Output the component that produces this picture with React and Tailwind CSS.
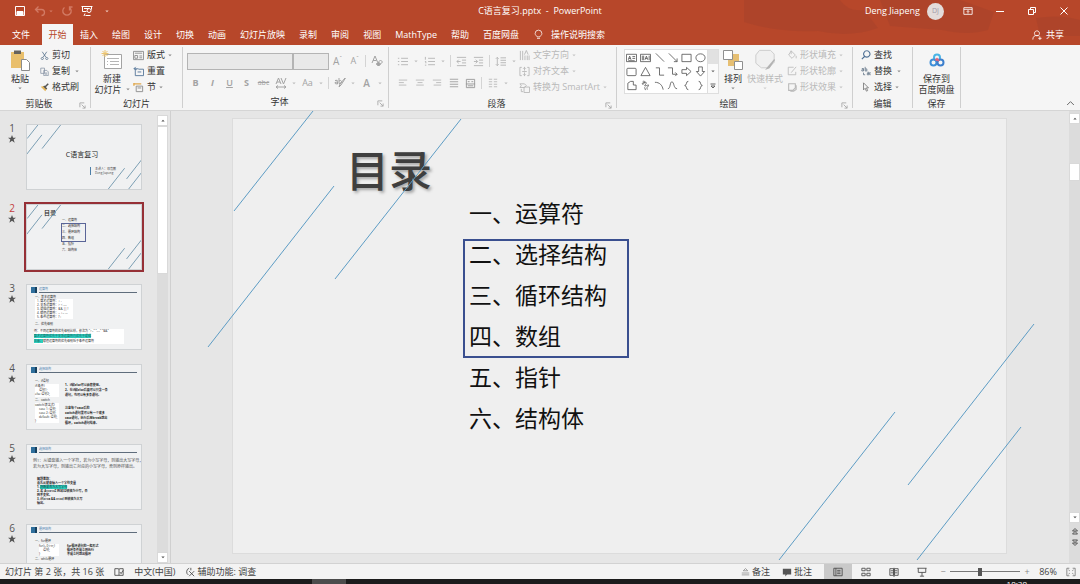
import React, { useState } from 'react';
import { clsx } from 'clsx';

const TABS = ['插入', '绘图', '设计', '切换', '动画', '幻灯片放映', '录制', '审阅', '视图', 'MathType', '帮助', '百度网盘'];

const OUTLINE = ['一、运算符', '二、选择结构', '三、循环结构', '四、数组', '五、指针', '六、结构体'];

const SHAPES = [
  { name: '横排文本框', d: 'M.5 2.5h11v8H.5zM2.5 8.5l1.5-4 1.5 4M3 7h2M7 5h3M7 7h3M2.500 9.500h7' },
  { name: '竖排文本框', d: 'M.5 2.5h11v8H.5zM5.500 8.500l1.500-4 1.500 4M6 7h2M2.500 4v5M4 4v5M10 4v5' },
  { name: '直线', d: 'M2 1.500l9 9' },
  { name: '箭头', d: 'M2 1.500l9 9M11 7v3.500H7.500' },
  { name: '矩形', d: 'M1 2.500h10v8H1z' },
  { name: '椭圆', d: 'M6 2c3 0 5 2 5 4.300s-2 4.300-5 4.300-5-2-5-4.300S3 2 6 2z' },
  { name: '圆角矩形', d: 'M2 2.500h8q1 0 1 1v6q0 1-1 1H2q-1 0-1-1v-6q0-1 1-1z' },
  { name: '三角形', d: 'M6 1.500l5 9H1z' },
  { name: '肘形连接符', d: 'M2 2h4v8h5' },
  { name: '肘形箭头', d: 'M1 2h5v7h5M9 7l2 2-2 2' },
  { name: '右箭头', d: 'M1 4h5V1.500L11 6l-5 4.500V8H1z' },
  { name: '下箭头', d: 'M4 1h4v5h2.500L6 11 1.500 6H4z' },
  { name: '任意多边形', d: 'M2 3.500l3-2h3v4h3v5H2z' },
  { name: '自由曲线', d: 'M3 1.500c4-1 2 3 0 3s0-2 3-2-3 5 0 4 4-2 3 0-2 1-1 4M5 8l1 3' },
  { name: '弧形', d: 'M1 2.500c5 0 8 3 9 8' },
  { name: '曲线', d: 'M1 9.500c3 0 2-8 4.500-7.500S7 9.500 11 9.500' },
  { name: '左大括号', d: 'M8 1.500Q6 1.500 6 3.500T4 6q2 .5 2 2.500t2 2' },
  { name: '右大括号', d: 'M4 1.500q2 0 2 2T8 6Q6 6.500 6 8.500t-2 2' },
];

function Icon({ d, className, box = 12, width = 1, children }) {
  return (
    <svg
      viewBox={`0 0 ${box} ${box}`}
      className={clsx('shrink-0', className)}
      fill="none"
      stroke="currentColor"
      strokeWidth={width}
      aria-hidden="true"
    >
      {d && <path d={d} />}
      {children}
    </svg>
  );
}

function Caret({ className = 'text-[#8a8a8a]' }) {
  return (
    <svg viewBox="0 0 6 4" className={clsx('w-1 h-[3px] shrink-0', className)} aria-hidden="true">
      <path d="M.5 .5L3 3 5.500 .5z" fill="currentColor" />
    </svg>
  );
}

function CaretButton({ label }) {
  return (
    <button aria-label={label} className="w-[10px] h-4 flex items-center justify-center">
      <Caret className="text-[#bdbdbd]" />
    </button>
  );
}

function Tool({ label, children }) {
  return (
    <button aria-label={label} className="w-[17px] h-4 flex items-center justify-center whitespace-nowrap">
      {children}
    </button>
  );
}

function Divider() {
  return <span className="w-px h-3 mx-[2px] bg-[#d4d4d4]" />;
}

function Group({ title, launcher, className, children }) {
  return (
    <section aria-label={title} className={clsx('shrink-0 flex flex-col border-r border-[#cfcfcf]', className)}>
      <div className="h-[49px] flex">{children}</div>
      <div
        className={clsx('flex-1 relative flex items-center justify-center pt-[3px] text-[#333]', launcher && 'pr-3')}
      >
        {title}
        {launcher && (
          <button aria-label={`${title}设置`} className="absolute right-1 bottom-px text-[#a8a8a8]">
            <Icon className="size-[7px]" box={8} d="M1 6V1h5M3 3l4 4M7 4v3H4" />
          </button>
        )}
      </div>
    </section>
  );
}

function SmallAction({ icon, caret, disabled, children }) {
  return (
    <button
      disabled={disabled}
      className={clsx('h-4 flex items-center gap-[3px] whitespace-nowrap', disabled ? 'text-[#b9b9b9]' : 'text-[#333]')}
    >
      {icon}
      <span>{children}</span>
      {caret && <Caret className={disabled ? 'text-[#c6c6c6]' : 'text-[#8a8a8a]'} />}
    </button>
  );
}

function BigAction({ icon, lines, caret, disabled, className }) {
  return (
    <button
      disabled={disabled}
      className={clsx('flex flex-col items-center leading-[11px]', disabled ? 'text-[#b9b9b9]' : 'text-[#333]', className)}
    >
      <span className="h-[26px] flex items-center">{icon}</span>
      {lines.map((l, i) => (
        <span key={l} className="flex items-center gap-1 whitespace-nowrap">
          {l}
          {caret === 'inline' && i === lines.length - 1 && <Caret />}
        </span>
      ))}
      {caret === 'below' && (
        <span className="h-2 flex items-center">
          <Caret className={disabled ? 'text-[#cfcfcf]' : 'text-[#8a8a8a]'} />
        </span>
      )}
    </button>
  );
}

function TitleBar() {
  return (
    <header className="h-[22px] relative grid grid-cols-[1fr_auto_1fr] items-center text-white">
      <div className="flex items-center pl-[14px]">
        <button aria-label="保存" className="w-3">
          <Icon className="size-3" d="M1.500 1.500h9v9h-9zM3 6.500h6v4H3zM5 8.500v2">
            <path d="M3 7h6v3H3z" fill="currentColor" stroke="none" />
          </Icon>
        </button>
        <button aria-label="撤消" className="ml-2 w-3 text-[#d27a64]">
          <Icon className="size-3" d="M4.500 1.500l-3 3 3 3M1.500 4.500h6q3 0 3 3t-3 3" width={1.300} />
        </button>
        <span className="ml-[3px] flex"><Caret className="text-[#d27a64]" /></span>
        <button aria-label="恢复" className="ml-2 w-3 text-[#d27a64]">
          <Icon className="size-3" d="M3.500 2.500a4.200 4.200 0 1 0 5 0M8.500 5.500V2h3" width={1.300} />
        </button>
        <button aria-label="从头开始" className="ml-2 w-3">
          <Icon className="size-3" d="M.5 1.500h11M1.500 1.500v5h4M10.500 1.500v3M3 3.500h5M4 8.500l-1 2.500M8 7.500a2 2 0 1 0 .1-4 2 2 0 0 0-.1 4M4.500 10.500h5" />
        </button>
        <button aria-label="自定义快速访问工具栏" className="ml-3 flex"><Caret className="text-[#f0c9bd]" /></button>
      </div>
      <h1 className="text-[9px]">C语言复习.pptx&nbsp; -&nbsp; PowerPoint</h1>
      <div className="flex items-center justify-end h-full">
        <span>Deng Jiapeng</span>
        <span className="ml-[7px] mr-2 size-[17px] rounded-full bg-[#e3dcda] text-[#a09aa8] text-[7px] flex items-center justify-center">DJ</span>
        <button aria-label="功能区显示选项" className="w-8 flex justify-center">
          <Icon className="w-[10px] h-[10px]" d="M1 2h10v8H1zM1 4h10M6 9V5.500M4.500 7L6 5.500 7.500 7" />
        </button>
        <button aria-label="最小化" className="w-8 flex justify-center">
          <Icon className="size-2" box={8} d="M0 4.500h8" />
        </button>
        <button aria-label="还原" className="w-8 flex justify-center">
          <Icon className="size-2" box={8} d="M.5 2.500h5v5h-5zM2.500 2V.5h5v5H6" />
        </button>
        <button aria-label="关闭" className="w-8 flex justify-center">
          <Icon className="size-2" box={8} d="M.5 .5l7 7M7.500 .5l-7 7" />
        </button>
      </div>
    </header>
  );
}

function TabBar() {
  return (
    <nav className="flex items-stretch h-[23px] pt-[2px] text-white relative" aria-label="功能区选项卡">
      <button className="w-[42px]">文件</button>
      <button className="w-[31px] bg-[#f5f5f5] text-[#b7472a]">开始</button>
      {TABS.map((t) => (
        <button key={t} className="px-[7px] whitespace-nowrap">{t}</button>
      ))}
      <button className="flex items-center gap-2 pl-2">
        <Icon className="w-[9px] h-3" d="M4 8.500C4 7 1.500 6.500 1.500 4a4 4 0 0 1 9 0c0 2.500-2.500 3-2.500 4.500zM4 10.500h4" />
        操作说明搜索
      </button>
      <button className="ml-auto mr-4 flex items-center gap-1">
        <Icon className="size-[10px]" d="M6 1a3 3 0 1 1-.1 0M1 11.500q0-5 5-5 2 0 3 1M9.500 8v4M7.500 10h4" />
        共享
      </button>
    </nav>
  );
}

function Ribbon() {
  return (
    <div className="h-[66px] flex relative bg-[#f5f5f5] pt-[2px] pb-[2px] border-b border-[#d5d5d5]">
      <Group title="剪贴板" launcher className="w-[91px]">
        <BigAction
          className="w-[40px]"
          caret="below"
          lines={['粘贴']}
          icon={
            <svg viewBox="0 0 20 22" className="w-5 h-[22px]" aria-hidden="true">
              <path d="M1 3h13v16H1z" fill="#e9bf6c" />
              <path d="M4 1.500h7V5H4z" fill="#66625c" />
              <path d="M11.500 10.500h5l3 3v8h-8z" fill="#fff" stroke="#8b8b8b" />
            </svg>
          }
        />
        <div className="flex flex-col">
          <SmallAction icon={<Icon className="size-[9px] text-[#4d6a86]" d="M3 1l5 7.500M9 1L4 8.500M3 8.500a1.500 1.500 0 1 0 .1 0M9 8.500a1.500 1.500 0 1 0 .1 0" />}>剪切</SmallAction>
          <SmallAction caret icon={<Icon className="size-[9px] text-[#8492a3]" d="M1 1.500h5v7H1zM5 4.500h4l2 2v5H5zM6.500 8h3M6.500 9.500h3" />}>复制&nbsp;</SmallAction>
          <SmallAction
            icon={
              <svg viewBox="0 0 12 12" className="size-[9px]" aria-hidden="true">
                <path d="M1 5l4-1 4 4-2 3z" fill="#e5b65a" />
                <path d="M7 5l4-4M5 4l4 4" stroke="#555" strokeWidth="2" />
              </svg>
            }
          >
            格式刷
          </SmallAction>
        </div>
      </Group>

      <Group title="幻灯片" className="w-[92px]">
        <BigAction
          className="w-[42px]"
          caret="inline"
          lines={['新建', '幻灯片']}
          icon={
            <svg viewBox="0 0 22 22" className="size-[22px]" aria-hidden="true">
              <path d="M3.500 5.500h17v14h-17z" fill="#fff" stroke="#a3a3a3" />
              <path d="M6 9.500h12M9 12.500h9M9 15.500h9M6 12.500h1M6 15.500h1" stroke="#b5b5b5" />
              <path d="M4 1v7M.5 4.500h7M1.500 2l5 5M6.500 2l-5 5" stroke="#edc56f" />
            </svg>
          }
        />
        <div className="flex flex-col">
          <SmallAction caret icon={<Icon className="size-[11px] text-[#8d8d8d]" d="M.5 1.500h11v9H.5zM2 3.500h8M2 6h3v3H2zM7 6.500h3M7 8.500h3" />}>版式</SmallAction>
          <SmallAction icon={<Icon className="size-[11px] text-[#56779a]" d="M2.500 3.500v7h9v-7H6M5 6.500h4M1 3l2-2M1 3l3 1M1 3h5" />}>重置</SmallAction>
          <SmallAction
            caret
            icon={
              <Icon className="size-[11px] text-[#8d8d8d]" d="M3.500 4.500h7v6h-7zM5 6.500h4">
                <path d="M1 2h8M1 1v3" stroke="#e0a84d" strokeWidth="1.500" />
              </Icon>
            }
          >
            节
          </SmallAction>
        </div>
      </Group>

      <Group title="字体" launcher className="w-[206px]">
        <div className="pl-1 flex flex-col gap-[5px] pt-[5px] text-[#a3a3a3]">
          <div className="flex items-center h-[18px]">
            <select aria-label="字体" disabled className="w-[106px] h-[17px] border border-[#b4b4b4] bg-[#e9e9e9] appearance-none" />
            <select aria-label="字号" disabled className="w-9 h-[17px] border border-[#b4b4b4] bg-[#e9e9e9] appearance-none" />
            <Tool label="增大字号"><span className="text-[10px]">A</span><sup className="text-[6px]">ˆ</sup></Tool>
            <Tool label="减小字号"><span className="text-[9px]">A</span><sup className="text-[6px]">ˇ</sup></Tool>
            <Divider />
            <Tool label="清除所有格式">
              <Icon className="size-3" d="M1 8l3-7 2.500 6M2 5.500h3.500M5.500 9l4-4 2 2-4 4z">
                <path d="M5.500 9l2-2 2 2-2 2z" fill="currentColor" />
              </Icon>
            </Tool>
          </div>
          <div className="flex items-center">
            <Tool label="加粗"><b>B</b></Tool>
            <Tool label="倾斜"><i className="font-bold">I</i></Tool>
            <Tool label="下划线"><u className="font-semibold">U</u></Tool>
            <Tool label="文字阴影"><b>S</b></Tool>
            <Tool label="删除线"><s className="text-[7px]">abc</s></Tool>
            <Tool label="字符间距"><Icon className="size-3" d="M1 7l2.500-6L6 7M2 5h3M6 1l2.500 6L11 1M1 10h10M3 8.500L1 10l2 1.500M9 8.500l2 1.500-2 1.500" /></Tool>
            <CaretButton label="字符间距选项" />
            <Tool label="更改大小写">Aa</Tool>
            <CaretButton label="大小写选项" />
            <Divider />
            <Tool label="文本突出显示颜色"><Icon className="size-3" d="M1 3.500q3-1 2.500 1v2.500q-3 0-2.500-1.500l2-.5M5 1v5.500q3 0 2.500-2T5 4M11.500 1L7 8l-2 2 1-3 5-6" /></Tool>
            <CaretButton label="突出显示选项" />
            <Tool label="字体颜色"><span className="text-[10px] font-semibold">A</span></Tool>
            <CaretButton label="字体颜色选项" />
          </div>
        </div>
      </Group>

      <Group title="段落" launcher className="w-[228px]">
        <div className="pl-[5px] flex flex-col gap-[5px] pt-[5px] text-[#b5b5b5]">
          <div className="flex items-center h-[18px]">
            <Tool label="项目符号"><Icon className="size-[11px]" d="M1 2.500h1.500M1 6h1.500M1 9.500h1.500M4.500 2.500H12M4.500 6H12M4.500 9.500H12" /></Tool>
            <CaretButton label="项目符号选项" />
            <Tool label="编号"><Icon className="size-[11px]" d="M1.500 1v3M1 6h1v2M1 10h1.500M4.500 2.500H12M4.500 6H12M4.500 9.500H12" /></Tool>
            <CaretButton label="编号选项" />
            <Divider />
            <Tool label="降低列表级别"><Icon className="size-[11px]" d="M1 1.500h10M6.500 4.500H11M6.500 7.500H11M1 10.500h10M5 6H1M3 4L1 6l2 2" /></Tool>
            <Tool label="提高列表级别"><Icon className="size-[11px]" d="M1 1.500h10M6.500 4.500H11M6.500 7.500H11M1 10.500h10M1 6h4M3 4l2 2-2 2" /></Tool>
            <Divider />
            <Tool label="行距"><Icon className="size-[11px]" d="M2.500 1.500v9M1 3l1.500-1.500L4 3M1 9l1.500 1.500L4 9M6 2h6M6 4.700h6M6 7.300h6M6 10h6" /></Tool>
            <CaretButton label="行距选项" />
          </div>
          <div className="flex items-center">
            <Tool label="左对齐"><Icon className="size-[10px]" d="M1 2.500h10M1 5.500h6M1 8.500h9" /></Tool>
            <Tool label="居中"><Icon className="size-[10px]" d="M1 2.500h10M3 5.500h6M1.500 8.500h9" /></Tool>
            <Tool label="右对齐"><Icon className="size-[10px]" d="M1 2.500h10M5 5.500h6M2 8.500h9" /></Tool>
            <Tool label="两端对齐"><Icon className="size-[10px] text-[#999]" d="M1 1.500h10M1 4.500h10M1 7.500h10M1 10.500h10" /></Tool>
            <Tool label="分散对齐"><Icon className="size-[11px] text-[#999]" d="M1.500 1.500h9v9h-9zM3 4h2M7 4h2M1 6.500h10M3 8.500h6" /></Tool>
            <Divider />
            <Tool label="分栏"><Icon className="size-[10px]" d="M1 1.500h4M1 4.500h4M1 7.500h4M1 10.500h4M7 1.500h4M7 4.500h4M7 7.500h4M7 10.500h4" /></Tool>
            <CaretButton label="分栏选项" />
          </div>
        </div>
        <div className="flex flex-col">
          <SmallAction disabled caret icon={<Icon className="size-[11px]" d="M1.500 1v10M4 1v10M6.500 6v5M9 6v5M6 5l2-4.500L10 5M11 6v5" />}>文字方向</SmallAction>
          <SmallAction disabled caret icon={<Icon className="size-[11px]" d="M3 1.500H1v9h2M9 1.500h2v9H9M3.500 6h5M6 1v4M4.500 3L6 1.500 7.500 3M6 7v4M4.500 9L6 10.500 7.500 9" />}>对齐文本</SmallAction>
          <SmallAction disabled caret icon={<Icon className="size-[11px]" d="M1 2h5l2 2-2 2H1l1.500-2zM5.500 5.500h6v6h-6zM2.500 7.500v3h2" />}>转换为 SmartArt</SmallAction>
        </div>
      </Group>

      <Group title="绘图" launcher className="w-[236px]">
        <div className="ml-[7px] mt-[2px] h-[45px] flex bg-white border border-[#dedede]">
          <div className="grid grid-cols-6 w-[82px] items-center justify-items-center text-[#555]">
            {SHAPES.map((s) => (
              <button key={s.name} aria-label={s.name}>
                <Icon className="size-[11px]" d={s.d} width={0.9} />
              </button>
            ))}
          </div>
          <div className="w-[11px] flex flex-col border-l border-[#dedede] bg-[#fafafa]">
            <button aria-label="上一行" className="flex-1 bg-[#e1e1e1]" />
            <button aria-label="下一行" className="flex-1 flex items-center justify-center"><Caret className="text-[#666]" /></button>
            <button aria-label="其他形状" className="flex-1 flex items-center justify-center">
              <Icon className="size-[6px] text-[#666]" box={6} d="M.5 1h5M1 3l2 2 2-2z" />
            </button>
          </div>
        </div>
        <BigAction
          className="w-7"
          caret="below"
          lines={['排列']}
          icon={
            <svg viewBox="0 0 22 22" className="size-[22px]" aria-hidden="true">
              <path d="M6 5h11v12H6z" fill="#e6bf73" />
              <path d="M1.500 1.500h9v9h-9zM12.500 12.500h8v8h-8z" fill="#fff" stroke="#8f8f8f" />
            </svg>
          }
        />
        <BigAction
          disabled
          className="w-9"
          caret="below"
          lines={['快速样式']}
          icon={
            <svg viewBox="0 0 24 24" className="size-[22px]" aria-hidden="true">
              <path d="M6 1.500h12l4 4v9l-6 6H8l-6-5v-9z" fill="#f0f0f0" stroke="#c9c9c9" />
              <path d="M22 11l-7 8-3 4 5-2 6-9z" fill="#b3b3b3" />
            </svg>
          }
        />
        <div className="flex flex-col ml-1">
          <SmallAction disabled caret icon={<Icon className="size-[10px]" d="M5 1l5 5-4 4-4-4zM5 1v4M11 7v3" />}>形状填充</SmallAction>
          <SmallAction disabled caret icon={<Icon className="size-[10px]" d="M8 1.500H1.500v9h9V7M11 1L5 8" />}>形状轮廓</SmallAction>
          <SmallAction disabled caret icon={<Icon className="size-[10px]" d="M2 2h8v5L7 10H2zM11 4v5l-3 2H4" width={1.300} />}>形状效果</SmallAction>
        </div>
      </Group>

      <Group title="编辑" className="w-[60px]">
        <div className="flex flex-col pl-2">
          <SmallAction icon={<Icon className="size-[10px] text-[#4b6e93]" d="M7 1a3.800 3.800 0 1 1-.1 0M4.500 7.500L1 11" width={1.300} />}>查找</SmallAction>
          <SmallAction caret icon={<Icon className="size-[10px] text-[#68798c]" d="M1 3h2v3H1V4.500h2M5 1v5h2V3.500H5M3 8v2.500h2M7.500 7.500h2v3h-2V9h2M11.500 8h-1v2.500h1" />}>替换&nbsp;</SmallAction>
          <SmallAction caret icon={<Icon className="size-[10px] text-[#777]" d="M3 1v8.500l2-2 1.500 3.500 1.500-.7L6.500 7H9z" />}>选择</SmallAction>
        </div>
      </Group>

      <Group title="保存" className="w-[48px]">
        <BigAction
          className="w-full"
          lines={['保存到', '百度网盘']}
          icon={
            <svg viewBox="0 0 16 14" className="w-4 h-[14px]" fill="none" strokeWidth="2" aria-hidden="true">
              <circle cx="8" cy="4.500" r="3" stroke="#4ab4e6" />
              <circle cx="4.500" cy="9.500" r="3" stroke="#3e8fd8" />
              <circle cx="11.500" cy="9.500" r="3" stroke="#3c7fcd" />
              <path d="M6.500 7.500L8 6l2 2" stroke="#e0647c" />
            </svg>
          }
        />
      </Group>

      <button aria-label="折叠功能区" className="ml-auto mr-[5px] self-end text-[#666]">
        <Icon className="size-[9px]" d="M1.500 8L6 3.500 10.500 8" width={1.300} />
      </button>
    </div>
  );
}

function DiagonalLines({ faint }) {
  return (
    <svg
      viewBox="0 0 773 434"
      className="absolute inset-0 w-full h-full overflow-visible pointer-events-none"
      stroke={faint ? '#7c9fb4' : '#5d9cc4'}
      aria-hidden="true"
    >
      <path
        vectorEffect="non-scaling-stroke"
        d="M80-8L1 92M228 0L102 160M101 67L-25 228M662 293L546 441M801 205L675 366M788 308L684 441"
      />
    </svg>
  );
}

function CoverPreview() {
  return (
    <>
      <DiagonalLines faint />
      <p className="pt-[25px] text-center text-[7px] leading-[10px] -ml-1">C语言复习</p>
      <div className="mt-[7px] ml-[63px] pl-1 border-l border-[#4d7fa8] text-[3px] leading-[4px] text-[#444]">
        <p>主讲人：邓嘉鹏</p>
        <p>Deng Jiapeng</p>
      </div>
    </>
  );
}

function OutlinePreview() {
  return (
    <>
      <DiagonalLines faint />
      <p className="pl-[17px] pt-[4px] text-[6px] leading-[8px] font-medium">目录</p>
      <ul className="ml-[35px] text-[3px] leading-[6px]">
        {OUTLINE.map((t) => (
          <li key={t}>{t}</li>
        ))}
      </ul>
      <span className="absolute left-[34px] top-[18px] w-[25px] h-[19px] border border-[#5a6598]" />
    </>
  );
}

function LessonPreview({ title, children }) {
  return (
    <div className="px-1 pt-[2px] text-[3px] leading-[4px] text-[#222]">
      <div className="flex items-center gap-[2px] mb-[2px]">
        <span className="size-[6px] bg-[#2f6f9c] border-r-2 border-[#16405f]" />
        <span className="flex-1 border-b border-[#5f6d7c] text-[#4a7fb0] leading-[5px]">{title}</span>
      </div>
      {children}
    </div>
  );
}

function Highlight({ children }) {
  return <mark className="bg-[#2fcfc0] text-[#17605c]">{children}</mark>;
}

function OperatorPreview() {
  return (
    <LessonPreview title="运算符">
      <p className="pl-1">一、基本运算符</p>
      <div className="ml-1 w-[38px] bg-white pl-[2px] leading-[4px] whitespace-nowrap">
        <p>1. 算术运算符：+ -</p>
        <p>2. 关系运算符：&gt; &lt; ==</p>
        <p>3. 逻辑运算符：&amp;&amp; || !</p>
        <p>4. 赋值运算符：= += -=</p>
        <p>5. 条件运算符：? :</p>
      </div>
      <p className="pl-1 py-[3px]">二、优先级别</p>
      <div className="ml-[3px] w-[90px] bg-white leading-[5px] whitespace-nowrap">
        <p>例：不同运算符的优先级别比较，依次为 &quot;&gt;=&quot; &quot;==&quot; &quot;&amp;&amp;&quot;</p>
        <p><Highlight>算术运算符优先于关系运算符再优先于逻辑</Highlight></p>
        <p><Highlight>注意：</Highlight>赋值运算符的优先级别低于条件运算符</p>
      </div>
    </LessonPreview>
  );
}

function ChoicePreview() {
  return (
    <LessonPreview title="选择结构">
      <p className="pl-1 pt-1">一、if语句</p>
      <div className="flex">
        <div className="w-[30px] ml-1">
          <div className="bg-white w-6 h-[13px] mt-px whitespace-nowrap">
            <p>if(条件)</p>
            <p className="pl-1">语句1;</p>
            <p>else 语句2;</p>
          </div>
          <p className="py-px">二、switch</p>
          <div className="bg-white w-6 whitespace-nowrap">
            <p>switch(表达式)</p>
            <p className="pl-1">case 1: 语句;</p>
            <p className="pl-1">case 2: 语句;</p>
            <p className="pl-1">default: 语句;</p>
            <p>{'}'}</p>
          </div>
        </div>
        <div className="leading-[5px] font-bold whitespace-nowrap">
          <p>1、if和else可以嵌套使用。</p>
          <p>2、在if和else后面可以只含一条</p>
          <p>语句，也可以有多条语句。</p>
          <p className="pt-2">注意每个case后的</p>
          <p>switch语句里可以有一个或多</p>
          <p>case语句，执行后用break跳出</p>
          <p>循环，switch语句结束。</p>
        </div>
      </div>
    </LessonPreview>
  );
}

function CasePreview() {
  return (
    <LessonPreview title="选择结构">
      <p className="pt-[3px] pl-[2px] leading-[6px] whitespace-nowrap text-[4px] text-[#555]">
        例1：从键盘输入一个字符，若为小写字母，则输出大写字母，
        <br />
        若为大写字母，则输出它对应的小写字母，否则原样输出。
      </p>
      <div className="pl-[6px] pt-[7px] font-bold leading-[4px]">
        <p>解题思路：</p>
        <p>首先从键盘输入一个字符变量</p>
        <p>1. <Highlight>判断是否为大写字母</Highlight></p>
        <p>2. 若 A&lt;=c&lt;=Z 则加32转换为小写，否</p>
        <p>则不变化。</p>
        <p>3. if(c&gt;=a &amp;&amp; c&lt;=z) 则转换为大写</p>
        <p>输出。</p>
      </div>
    </LessonPreview>
  );
}

function LoopPreview() {
  return (
    <LessonPreview title="循环结构">
      <p className="pl-1 pt-1">一、for循环</p>
      <div className="flex">
        <div className="bg-white w-5 h-3 ml-2 mt-px mr-2 whitespace-nowrap">
          <p>for(i=0;i&lt;n;)</p>
          <p className="pl-1">语句;</p>
          <p>{'}'}</p>
        </div>
        <div className="font-bold pt-px whitespace-nowrap">
          <p>for循环语句的一般形式</p>
          <p>循环条件成立则执行</p>
          <p>不成立时跳出循环</p>
        </div>
      </div>
      <p className="pl-1 pt-px">二、while循环</p>
    </LessonPreview>
  );
}

const THUMBS = [CoverPreview, OutlinePreview, OperatorPreview, ChoicePreview, CasePreview, LoopPreview];

function Thumbnails({ current, onSelect }) {
  return (
    <ol className="flex-1 overflow-hidden pt-[7px]">
      {THUMBS.map((Preview, i) => {
        const active = current === i;
        return (
          <li key={i} className="h-20 flex">
            <div className={clsx('w-6 text-center leading-[12px]', active ? 'text-[#c43e3e]' : 'text-[#555]')}>
              <div className="text-[10px]">{i + 1}</div>
              <Icon className="size-2 mx-auto mt-px text-[#555]">
                <path
                  d="M6 0l1.700 4H12L8.500 6.700 10 11.500 6 8.700 2 11.500l1.500-4.800L0 4h4.300z"
                  fill="currentColor"
                  stroke="none"
                />
              </Icon>
            </div>
            <button
              onClick={() => onSelect(i)}
              aria-label={`幻灯片 ${i + 1}`}
              className={clsx('w-[120px] h-[70px] border-2 text-left', active ? 'border-[#963036]' : 'border-transparent')}
            >
              <div className="relative h-full overflow-hidden bg-[#f0f1f2] border border-[#cfd2d4] text-[#222]">
                <Preview />
              </div>
            </button>
          </li>
        );
      })}
    </ol>
  );
}

function ScrollArrow({ label, up }) {
  return (
    <button aria-label={label} className="w-full h-[11px] shrink-0 bg-white border border-[#d9d9d9] flex items-center justify-center">
      <Caret className={clsx('text-[#555]', up && 'rotate-180')} />
    </button>
  );
}

function Slide() {
  return (
    <main className="flex-1 relative overflow-hidden pl-[62px] pr-[63px] pt-2">
      <article className="relative aspect-[773/434] bg-[#efefef] shadow-[0_0_0_1px_#dcdcdc]">
        <DiagonalLines />
        <h2 className="pl-[113px] pt-[27px] text-[43px] leading-[50px] font-medium text-[#3f3f3f] [text-shadow:2px_2px_3px_#a6a6a6]">
          目录
        </h2>
        <ul className="ml-[236px] mt-[-3px] text-[23px] leading-[41px] text-[#111]">
          {OUTLINE.map((t) => (
            <li key={t}>{t}</li>
          ))}
        </ul>
        <span className="absolute left-[230px] top-[120px] w-[166px] h-[119px] border-2 border-[#3a4f8f]" />
      </article>
    </main>
  );
}

function StatusBar() {
  const [zoom, setZoom] = useState(86);
  return (
    <footer className="h-[16px] shrink-0 flex items-center bg-[#f3f3f3] border-t border-[#d2d2d2] text-[#444] whitespace-nowrap">
      <span className="pl-[5px]">幻灯片 第 2 张，共 16 张</span>
      <button aria-label="拼写检查" className="ml-[10px]">
        <Icon className="size-[10px]" d="M1 2h4q1 0 1 1v7M6 10H1V2M6 3q0-1 1-1h4v8H6M7 6l1.500 2L11 4" />
      </button>
      <button className="ml-[10px]">中文(中国)</button>
      <button className="ml-[10px] flex items-center gap-[2px]">
        <Icon className="size-[10px]" d="M5 1.500a4.500 4.500 0 0 0-1 8M5 5l6 6M11 5l-6 6M7 1v3" />
        辅助功能: 调查
      </button>
      <div className="ml-auto flex items-center h-full">
        <button className="flex items-center gap-[2px]">
          <Icon className="size-[9px] text-[#888]" d="M3 5l3-3 3 3zM1 8h10M1 10.500h10" />
          备注
        </button>
        <button className="ml-3 mr-3 flex items-center gap-[2px]">
          <Icon className="size-[10px]">
            <path d="M1 2h10v7H6l-2 2.500V9H1z" fill="#555" stroke="none" />
          </Icon>
          批注
        </button>
        <button aria-label="普通视图" className="w-7 h-full flex items-center justify-center bg-[#c9c9c9]">
          <Icon className="size-[10px]" d="M1 1.500h10v9H1zM3.500 1.500v9M5 4h4M5 6h4M5 8h4" />
        </button>
        <button aria-label="幻灯片浏览" className="w-7 flex justify-center">
          <Icon className="size-[10px]" d="M1 1.500h4v3H1zM7 1.500h4v3H7zM1 7.500h4v3H1zM7 7.500h4v3H7z" />
        </button>
        <button aria-label="阅读视图" className="w-7 flex justify-center">
          <Icon className="size-[10px]" d="M1 2h4.500v8H1zM6.500 2H11v8H6.500zM2 4.500h3M2 7h3M7 4.500h3M7 7h3M6 1v11" />
        </button>
        <button aria-label="幻灯片放映" className="w-7 flex justify-center">
          <Icon className="size-[10px]" d="M.5 1.500h11M1.500 1.500v5h9v-5M6 6.500V11M3.500 11h5" />
        </button>
        <button aria-label="缩小" className="w-[14px] text-[#888]" onClick={() => setZoom(Math.max(10, zoom - 10))}>−</button>
        <input
          type="range"
          min="10"
          max="190"
          value={zoom}
          onChange={(e) => setZoom(Number(e.target.value))}
          aria-label="缩放"
          className="w-[70px] h-3 appearance-none bg-[linear-gradient(#777,#777)] bg-[length:100%_1px] bg-center bg-no-repeat [&::-webkit-slider-thumb]:appearance-none [&::-webkit-slider-thumb]:w-[4px] [&::-webkit-slider-thumb]:h-2 [&::-webkit-slider-thumb]:bg-[#555]"
        />
        <button aria-label="放大" className="w-[14px] text-[#888]" onClick={() => setZoom(Math.min(190, zoom + 10))}>+</button>
        <button className="ml-1 w-[20px]">{zoom}%</button>
        <button aria-label="适应窗口" className="ml-2 mr-1">
          <Icon className="size-[10px] text-[#777]" d="M4 1.500H1v9h3M8 1.500h3v9H8M4.500 4.500l-1.500-1M7.500 4.500l1.500-1M4.500 7.500L3 8.500M7.500 7.500L9 8.500" />
        </button>
      </div>
    </footer>
  );
}

export default function App() {
  const [current, setCurrent] = useState(1);

  return (
    <div className="h-screen flex flex-col overflow-hidden bg-[#e6e6e6] text-[9px] leading-[12px] text-[#333] font-['Open_Sans','Noto_Sans_CJK_SC',sans-serif]">
      <div className="relative bg-[#b7472a] shrink-0">
        <svg viewBox="0 0 360 45" className="absolute right-0 top-0 w-[360px] h-full" fill="#a9432b" aria-hidden="true">
          <path d="M24 0h96q8 12 24 10l14 18q-28 10-60 3-40 2-74-9zM160 0h80l34 12-6 18q-20 6-46 0l-52-4zM316 18q24-4 44 2v16h-40z" opacity=".6" />
        </svg>
        <TitleBar />
        <TabBar />
      </div>
      <div className="shrink-0">
        <Ribbon />
      </div>
      <div className="flex-1 min-h-0 flex">
        <aside className="w-[171px] flex pt-1 pr-[2px] border-r border-[#d0d0d0]" aria-label="幻灯片缩略图">
          <Thumbnails current={current} onSelect={setCurrent} />
          <div className="w-[11px] flex flex-col bg-[#dcdcdc]">
            <ScrollArrow label="向上滚动" up />
            <div className="h-[148px] bg-white border border-[#d9d9d9]" />
            <div className="mt-auto flex">
              <ScrollArrow label="向下滚动" />
            </div>
          </div>
        </aside>
        <Slide />
        <div className="w-[11px] flex flex-col pt-[2px] pb-4 bg-[#dcdcdc] text-[#555]">
          <ScrollArrow label="上滚" up />
          <div className="mt-[39px] h-[18px] bg-white border border-[#d9d9d9]" />
          <div className="mt-auto flex flex-col items-center gap-1">
            <ScrollArrow label="下滚" />
            <button aria-label="上一张幻灯片"><Icon className="size-2" box={8} d="M1.500 4L4 1.500 6.500 4zM1.500 7L4 4.500 6.500 7z" /></button>
            <button aria-label="下一张幻灯片"><Icon className="size-2" box={8} d="M1.500 1L4 3.500 6.500 1zM1.500 4L4 6.500 6.500 4z" /></button>
          </div>
        </div>
      </div>
      <StatusBar />
      <div className="h-[5px] shrink-0 flex overflow-hidden bg-[#1c1c1c] text-white">
        <span className="ml-[312px] w-[34px] h-full bg-[#4c4c4c]" />
        <time className="ml-auto mr-[53px] pt-px text-[8px] leading-[8px]">10:30</time>
      </div>
    </div>
  );
}
